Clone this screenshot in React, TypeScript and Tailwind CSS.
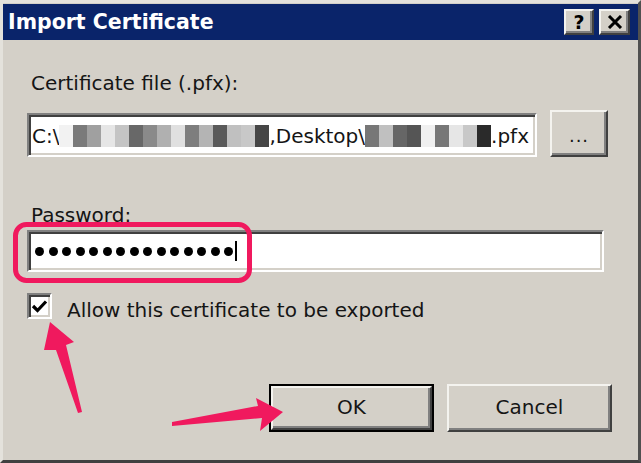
import type { ReactNode } from 'react'

const FONT = "font-['DejaVu_Sans',Verdana,sans-serif]"

// blurred-out parts of the file path, one shade per mosaic cell
const PATH_MOSAIC_A = [
  '#f2f2f2', '#7a7a7a', '#a0a0a0', '#e6e6e6', '#c4c4c4', '#686868', '#8a8a8a', '#b0b0b0',
  '#e0e0e0', '#7e7e7e', '#b4b4b4', '#5a5a5a', '#c0c0c0', '#c8c8c8', '#464646',
]
const PATH_MOSAIC_B = [
  '#777777', '#c0c0c0', '#666666', '#555555', '#f0f0f0', '#777777', '#e6e6e6', '#c8c8c8', '#2a2a2a',
]

function Mosaic({ cells }: { cells: string[] }) {
  return (
    <div className="flex h-[22px] items-stretch">
      {cells.map((c, i) => (
        <div key={i} className="w-[14px]" style={{ backgroundColor: c }} />
      ))}
    </div>
  )
}

function Sunken({ className, children }: { className: string; children?: ReactNode }) {
  return (
    <div
      className={`flex items-center border-2 border-t-[#808080] border-l-[#808080] border-r-white border-b-white bg-white shadow-[inset_2px_2px_0_#404040,inset_-2px_-2px_0_#d4d0c8] ${className}`}
    >
      {children}
    </div>
  )
}

function Raised({ className, children }: { className: string; children?: ReactNode }) {
  return (
    <div
      className={`flex items-center justify-center border-2 border-t-[#f4f3ef] border-l-[#f4f3ef] border-r-[#404040] border-b-[#404040] bg-[#d4d0c8] shadow-[inset_-2px_-2px_0_#808080] ${className}`}
    >
      {children}
    </div>
  )
}

function TitleButton({ children, className }: { children: ReactNode; className: string }) {
  return (
    <Raised className={`h-[26px] ${className}`}>
      {children}
    </Raised>
  )
}

export default function App() {
  return (
    <div className={`relative h-[463px] w-[641px] overflow-hidden ${FONT}`}>
      <div className="flex h-full w-full flex-col border-[3px] border-t-[#e4e2dc] border-l-[#e4e2dc] border-r-[#505050] border-b-[#404040] bg-[#d4d0c8] text-[20px] leading-[24px] text-[#151515]">
        {/* title bar */}
        <div className="mt-px flex h-[36px] items-center justify-between bg-[#0a246a] pl-[5px] pr-[8px]">
          <span className="text-[20.5px] font-bold text-white">Import Certificate</span>
          <div className="flex gap-[5px]">
            <TitleButton className="w-[30px]">
              <span className="text-[19px] font-bold text-black">?</span>
            </TitleButton>
            <TitleButton className="w-[31px]">
              <svg width="16" height="14" viewBox="0 0 16 14">
                <path d="M2 1 L14 13 M14 1 L2 13" stroke="#000" strokeWidth="3" />
              </svg>
            </TitleButton>
          </div>
        </div>

        <div className="flex flex-1 flex-col pl-[24px] pr-[26px]">
          <p className="ml-[4px] mt-[31px]">Certificate file (.pfx):</p>
          <div className="mt-[15px] flex items-start">
            <Sunken className="mt-[3px] h-[44px] w-[510px] pl-[3px] pt-[2px]">
              <span>C:\</span>
              <Mosaic cells={PATH_MOSAIC_A} />
              <span>,Desktop\</span>
              <Mosaic cells={PATH_MOSAIC_B} />
              <span>.pfx</span>
            </Sunken>
            <Raised className="ml-[13px] h-[47px] w-[58px] pt-[4px]">
              <span className="text-[18px] tracking-[1px]">...</span>
            </Raised>
          </div>

          <p className="ml-[4px] mt-[46px]">Password:</p>
          <Sunken className="mt-[3px] h-[42px] w-[577px] pl-[6px]">
            <div className="flex gap-[4.5px]">
              {Array.from({ length: 15 }).map((_, i) => (
                <div key={i} className="h-[9px] w-[9px] rounded-full bg-black" />
              ))}
            </div>
            <div className="ml-[2px] h-[20px] w-[2px] bg-black" />
          </Sunken>

          <div className="mt-[21px] flex items-start">
            <Sunken className="h-[26px] w-[25px] justify-center">
              <svg width="17" height="15" viewBox="0 0 17 15">
                <path d="M2 7 L6.5 11.5 L15 2.5" fill="none" stroke="#000" strokeWidth="3.2" />
              </svg>
            </Sunken>
            <p className="ml-[15px] mt-[5px]">Allow this certificate to be exported</p>
          </div>

          <div className="mt-[62px] flex justify-end gap-[13px]">
            <div className="border-2 border-black">
              <Raised className="h-[44px] w-[161px] pb-[2px]">OK</Raised>
            </div>
            <Raised className="h-[48px] w-[165px] pb-[2px]">Cancel</Raised>
          </div>
        </div>
      </div>

      {/* annotation marks drawn over the dialog */}
      <svg
        className="pointer-events-none absolute inset-0"
        width="641"
        height="463"
        viewBox="0 0 641 463"
      >
        <rect x="15.5" y="224.5" width="234" height="56" rx="11" fill="none" stroke="#f0195e" strokeWidth="5" />
        <polygon
          points="50,322 74,342 66,345 82,412 78,413 56,350 44,350"
          fill="#f0195e"
        />
        <polygon
          points="283,412 260,431 262,418 172,426 172,422 258,406 256,398"
          fill="#f0195e"
        />
      </svg>
    </div>
  )
}
